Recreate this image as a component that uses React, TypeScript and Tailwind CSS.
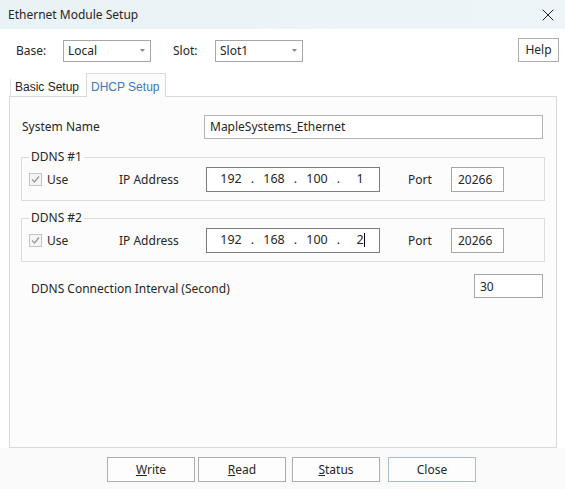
import React from 'react';
import { X } from 'lucide-react';

// Small combo box with a tiny grey drop arrow
const Combo = ({ value }: { value: string }) => (
  <div className="w-[88px] h-[22px] border border-[#a6a6a6] bg-white flex items-center pl-[4px] pr-[5px] justify-between">
    <span className="leading-none">{value}</span>
    <svg width="5" height="3" viewBox="0 0 5 3" className="mb-[2px]">
      <polygon points="0,0 5,0 2.5,3" fill="#8a8a8a" />
    </svg>
  </div>
);

const CheckBox = () => (
  <div className="w-[13px] h-[13px] border border-[#c4c4c4] bg-[#f5f5f5] flex items-center justify-center">
    <svg width="11" height="11" viewBox="0 0 11 11">
      <polyline points="2,5.5 4.5,8 9,2.5" fill="none" stroke="#9a9a9a" strokeWidth="1.3" />
    </svg>
  </div>
);

const IpBox = ({ last, caret = false }: { last: string; caret?: boolean }) => {
  const parts = ['192', '168', '100', last];
  return (
    <div className="w-[174px] h-[25px] border border-[#7d7d7d] bg-white flex items-center pl-[7px] text-[12.5px]">
      {parts.map((p, i) => (
        <React.Fragment key={i}>
          <span className="w-[34px] text-center relative">
            {p}
            {caret && i === 3 && (
              <span className="absolute top-[2px] right-[12px] w-px h-[14px] bg-black" />
            )}
          </span>
          {i < 3 && <span className="w-[9px] text-center">.</span>}
        </React.Fragment>
      ))}
    </div>
  );
};

const DdnsGroup = ({ title, last, caret = false }: { title: string; last: string; caret?: boolean }) => (
  <fieldset className="mx-[11px] border border-[#dcdcdc]">
    <legend className="ml-[7px] px-[2px] leading-[16px]">{title}</legend>
    <div className="flex items-center pl-[7px] pt-[2px] pb-[8px]">
      <div className="w-[90px] flex items-center gap-[5px]">
        <CheckBox />
        <span>Use</span>
      </div>
      <span className="w-[87px]">IP Address</span>
      <IpBox last={last} caret={caret} />
      <span className="ml-[28px] w-[43px]">Port</span>
      <div className="w-[53px] h-[25px] border border-[#a6a6a6] bg-white pl-[6px] pt-[3px]">20266</div>
    </div>
  </fieldset>
);

const DlgButton = ({ children, className = '' }: { children: React.ReactNode; className?: string }) => (
  <button className={`w-[88px] h-[25px] border bg-[#fdfdfd] flex items-center justify-center ${className}`}>
    {children}
  </button>
);

export default function App() {
  return (
    <div className="w-[565px] h-[489px] bg-white flex flex-col text-[#262626] font-['Noto_Sans',sans-serif] text-[12px] overflow-hidden">
      {/* Title bar */}
      <div className="h-[29px] shrink-0 bg-gradient-to-r from-[#e9f2f5] to-[#eef5f8] flex items-center justify-between pl-[8px] pr-[7px]">
        <span>Ethernet Module Setup</span>
        <X size={20} strokeWidth={1.2} className="text-[#222]" />
      </div>

      {/* Base / Slot row */}
      <div className="h-[44px] shrink-0 flex items-center pl-[16px] pr-[6px]">
        <span className="w-[47px]">Base:</span>
        <Combo value="Local" />
        <span className="ml-[22px] w-[42px]">Slot:</span>
        <Combo value="Slot1" />
        <button className="ml-auto w-[41px] h-[24px] border border-[#adadad] bg-white mb-[2px]">Help</button>
      </div>

      {/* Tabs */}
      <div className="h-[23px] shrink-0 flex items-end pl-[10px] font-['Liberation_Sans',sans-serif] text-[12px]">
        <div className="w-[76px] h-[17px] border-l border-[#e2e2e2] pl-[4px] leading-[17px] text-[#222]">Basic Setup</div>
        <div className="w-[80px] h-[24px] -mb-px relative z-10 border border-b-0 border-[#d9d9d9] bg-[#fcfcfc] pl-[4px] pt-[4px] text-[#3a78c0]">DHCP Setup</div>
      </div>

      {/* Tab panel */}
      <div className="ml-[9px] w-[548px] h-[352px] shrink-0 border border-[#d9d9d9] bg-[#fcfcfc] flex flex-col">
        <div className="mt-[18px] flex items-center justify-between pl-[12px] pr-[13px]">
          <span>System Name</span>
          <div className="w-[339px] h-[24px] border border-[#b4b4b4] bg-white pl-[5px] flex items-center">MapleSystems_Ethernet</div>
        </div>

        <div className="mt-[10px]">
          <DdnsGroup title="DDNS #1" last="1" />
        </div>
        <div className="mt-[9px]">
          <DdnsGroup title="DDNS #2" last="2" caret />
        </div>

        <div className="mt-[11px] flex items-center justify-between pl-[21px] pr-[13px]">
          <span className="mt-[7px]">DDNS Connection Interval (Second)</span>
          <div className="w-[69px] h-[24px] border border-[#a6a6a6] bg-white pl-[5px] pt-[3px]">30</div>
        </div>
      </div>

      {/* Bottom buttons */}
      <div className="flex-1 bg-[#fafafa] flex items-start pt-[9px]">
        <DlgButton className="ml-[107px] border-[#adadad]"><span><u>W</u>rite</span></DlgButton>
        <DlgButton className="ml-[3px] border-[#adadad]"><span><u>R</u>ead</span></DlgButton>
        <DlgButton className="ml-[6px] border-[#adadad]"><span><u>S</u>tatus</span></DlgButton>
        <DlgButton className="ml-[8px] border-[#a9bccd]">Close</DlgButton>
      </div>
    </div>
  );
}
